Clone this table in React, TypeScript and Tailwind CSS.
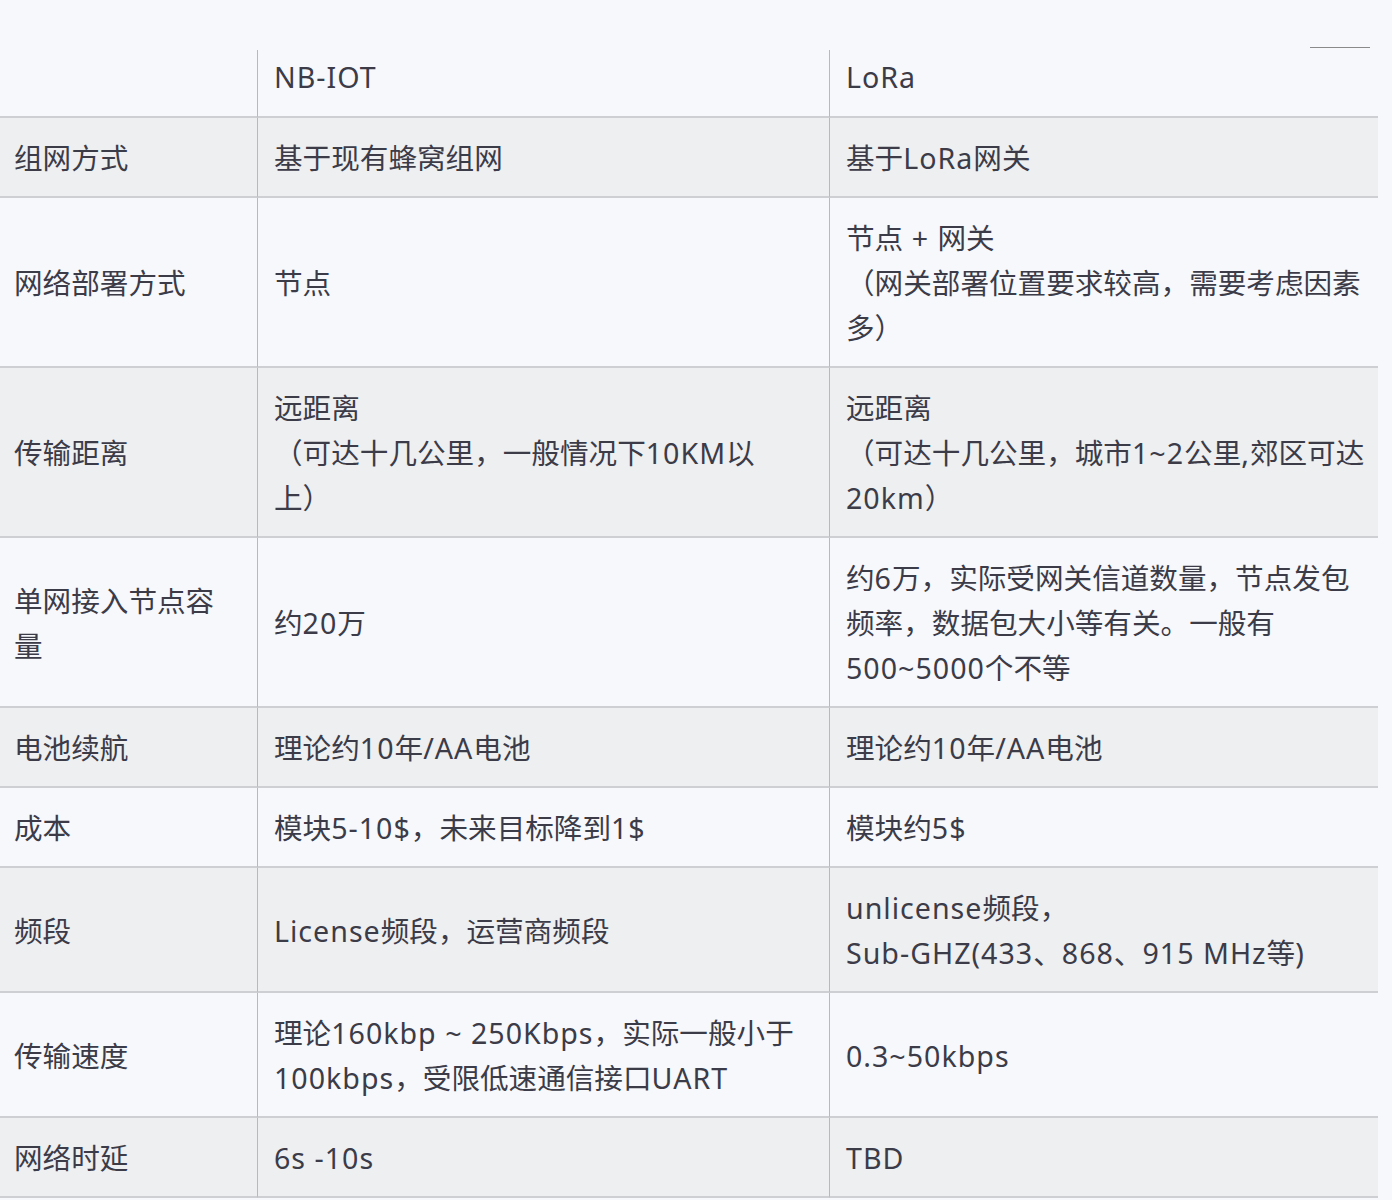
const rows: { label: string; nb: string[]; lora: string[]; striped: boolean }[] = [
  { label: "组网方式", nb: ["基于现有蜂窝组网"], lora: ["基于LoRa网关"], striped: true },
  {
    label: "网络部署方式",
    nb: ["节点"],
    lora: ["节点 + 网关", "（网关部署位置要求较高，需要考虑因素多）"],
    striped: false,
  },
  {
    label: "传输距离",
    nb: ["远距离", "（可达十几公里，一般情况下10KM以", "上）"],
    lora: ["远距离", "（可达十几公里，城市1~2公里,郊区可达20km）"],
    striped: true,
  },
  {
    label: "单网接入节点容量",
    nb: ["约20万"],
    lora: ["约6万，实际受网关信道数量，节点发包频率，数据包大小等有关。一般有500~5000个不等"],
    striped: false,
  },
  { label: "电池续航", nb: ["理论约10年/AA电池"], lora: ["理论约10年/AA电池"], striped: true },
  { label: "成本", nb: ["模块5-10$，未来目标降到1$"], lora: ["模块约5$"], striped: false },
  {
    label: "频段",
    nb: ["License频段，运营商频段"],
    lora: ["unlicense频段，", "Sub-GHZ(433、868、915 MHz等)"],
    striped: true,
  },
  {
    label: "传输速度",
    nb: ["理论160kbp ~ 250Kbps，实际一般小于100kbps，受限低速通信接口UART"],
    lora: ["0.3~50kbps"],
    striped: false,
  },
  { label: "网络时延", nb: ["6s -10s"], lora: ["TBD"], striped: true },
];

// latin runs in the shot are a touch wider than Noto Sans, so space them out a bit
function Txt({ s }: { s: string }) {
  return (
    <>
      {s.split(/([\x20-\x7e]+)/).map((part, i) =>
        /^[\x20-\x7e]+$/.test(part) ? (
          <span key={i} className="tracking-[1px]">
            {part}
          </span>
        ) : (
          part
        ),
      )}
    </>
  );
}

function Lines({ lines }: { lines: string[] }) {
  return (
    <div>
      {lines.map((l, i) => (
        <div key={i}>
          <Txt s={l} />
        </div>
      ))}
    </div>
  );
}

export default function App() {
  return (
    <div
      className="h-[1200px] w-[1392px] bg-[#f6f8fb] text-[28.6px] leading-[45px] text-[#3c3b48]"
      style={{ fontFamily: '"Noto Sans", "Noto Sans CJK SC", sans-serif' }}
    >
      <div className="flex h-[50px] justify-end pr-[22px] pt-[47px]">
        <div className="h-px w-[60px] bg-[#8a8a8a]" />
      </div>
      <div className="grid w-[1378px] grid-cols-[257px_572px_549px]">
        <div className="h-[68px] border-b-2 border-[#cdcfd2]" />
        <div className="h-[68px] border-b-2 border-l border-[#cdcfd2] border-l-[#b9b9bd] pl-[16px] pt-[4px]">
          <Txt s="NB-IOT" />
        </div>
        <div className="h-[68px] border-b-2 border-l border-[#cdcfd2] border-l-[#b9b9bd] pl-[16px] pt-[4px]">
          <Txt s="LoRa" />
        </div>
        {rows.map((r) => {
          const bg = r.striped ? "bg-[#eeeff1]" : "";
          return [
            <div
              key={r.label + "a"}
              className={`flex items-center border-b-2 border-[#cdcfd2] pb-[16px] pl-[14px] pr-[24px] pt-[17px] ${bg}`}
            >
              {r.label}
            </div>,
            <div
              key={r.label + "b"}
              className={`flex items-center border-b-2 border-l border-[#cdcfd2] border-l-[#b9b9bd] pb-[16px] pl-[16px] pr-[24px] pt-[17px] ${bg}`}
            >
              <Lines lines={r.nb} />
            </div>,
            <div
              key={r.label + "c"}
              className={`flex items-center border-b-2 border-l border-[#cdcfd2] border-l-[#b9b9bd] pb-[16px] pl-[16px] pr-[10px] pt-[17px] ${bg}`}
            >
              <Lines lines={r.lora} />
            </div>,
          ];
        })}
      </div>
    </div>
  );
}
